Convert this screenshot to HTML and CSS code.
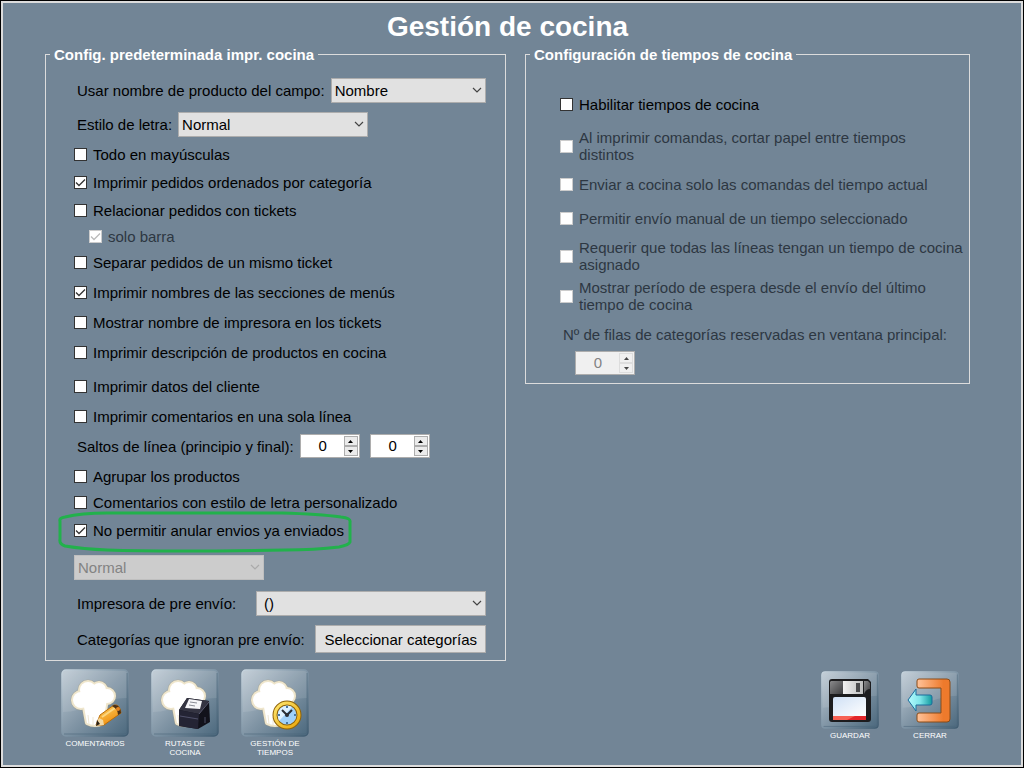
FILE: index.html
```html
<!DOCTYPE html>
<html lang="es">
<head>
    <meta charset="UTF-8">
    <meta name="viewport" content="width=device-width, initial-scale=1.0">
    <title>Gestión de cocina</title>
    <link rel="stylesheet" href="styles.css">
</head>
<body>
    <!-- Shared icon parts -->
    <svg class="defs" width="0" height="0" aria-hidden="true">
        <defs>
            <linearGradient id="tile" x1="0" y1="0" x2="1" y2="1">
                <stop offset="0" stop-color="#becad4"/>
                <stop offset="0.5" stop-color="#8296a6"/>
                <stop offset="1" stop-color="#4b687d"/>
            </linearGradient>
            <linearGradient id="edge" x1="0" y1="0" x2="1" y2="1">
                <stop offset="0" stop-color="#c9d6df"/>
                <stop offset="0.5" stop-color="#7f95a6"/>
                <stop offset="1" stop-color="#3f5b70"/>
            </linearGradient>
            <linearGradient id="pencil" x1="0" y1="0" x2="0.6" y2="1">
                <stop offset="0" stop-color="#ffd76a"/>
                <stop offset="1" stop-color="#ee8c0c"/>
            </linearGradient>
            <linearGradient id="door" x1="0" y1="0" x2="1" y2="0">
                <stop offset="0" stop-color="#ffc39a"/>
                <stop offset="0.8" stop-color="#ee7a2c"/>
            </linearGradient>
            <linearGradient id="arrow" x1="0" y1="0" x2="1" y2="0">
                <stop offset="0" stop-color="#b5fbff"/>
                <stop offset="0.5" stop-color="#7fe6ea"/>
                <stop offset="1" stop-color="#129a9f"/>
            </linearGradient>
            <linearGradient id="paper" x1="0" y1="0" x2="1" y2="1">
                <stop offset="0" stop-color="#cfe0f5"/>
                <stop offset="1" stop-color="#ffffff"/>
            </linearGradient>
            <linearGradient id="metal" x1="0" y1="0" x2="1" y2="0">
                <stop offset="0" stop-color="#f2f2f2"/>
                <stop offset="1" stop-color="#bdbdbd"/>
            </linearGradient>
            <linearGradient id="steel" x1="0" y1="0" x2="1" y2="1">
                <stop offset="0" stop-color="#8a8a8c"/>
                <stop offset="1" stop-color="#3c3c3e"/>
            </linearGradient>
            <linearGradient id="gold" x1="0" y1="0" x2="1" y2="1">
                <stop offset="0" stop-color="#ffe66e"/>
                <stop offset="1" stop-color="#e9a70c"/>
            </linearGradient>
            <symbol id="base" viewBox="0 0 68 68">
                <rect x="1" y="1" width="66" height="66" rx="4" fill="url(#tile)" stroke="url(#edge)" stroke-width="1.5"/>
                <path d="M2 5Q2 2 5 2H63Q66 2 66 5V29C43 29 22 43 2 43Z" fill="#ffffff" opacity="0.1"/>
                <path d="M3 65H63Q66 65 66 62V4" fill="none" stroke="#4b6579" stroke-width="1" opacity="0.6"/>
            </symbol>
            <g id="lobes">
                <circle cx="20" cy="31" r="8"/>
                <circle cx="27" cy="21" r="8"/>
                <circle cx="38" cy="21" r="7"/>
                <circle cx="46" cy="27" r="7"/>
                <circle cx="33" cy="29" r="12"/>
                <path d="M20 30H46L42 54Q34 58 26 54L23 38Z"/>
            </g>
            <symbol id="hat" viewBox="0 0 68 68">
                <use href="#lobes" fill="#a59c85" stroke="#a59c85" stroke-width="5" stroke-linejoin="round" opacity="0.5"/>
                <use href="#lobes" fill="#efe6cc" stroke="#efe6cc" stroke-width="4" stroke-linejoin="round"/>
                <use href="#lobes" fill="#ffffff"/>
                <path d="M27 46L28 55M32 48V56" stroke="#efe8d6" stroke-width="1"/>
            </symbol>
        </defs>
    </svg>

    <div class="window">
        <h1>Gestión de cocina</h1>

        <main class="panels">
            <fieldset class="panel">
                <legend>Config. predeterminada impr. cocina</legend>
                <div class="row lg text-row">
                    <label for="campo">Usar nombre de producto del campo:</label>
                    <select id="campo" class="fill">
                        <option>Nombre</option>
                    </select>
                </div>
                <div class="row lg text-row">
                    <label for="estilo">Estilo de letra:</label>
                    <select id="estilo" class="medium">
                        <option>Normal</option>
                    </select>
                </div>
                <label class="row"><input type="checkbox">Todo en mayúsculas</label>
                <label class="row md"><input type="checkbox" checked>Imprimir pedidos ordenados por categoría</label>
                <label class="row"><input type="checkbox">Relacionar pedidos con tickets</label>
                <label class="row sub disabled"><input type="checkbox" checked disabled>solo barra</label>
                <label class="row"><input type="checkbox">Separar pedidos de un mismo ticket</label>
                <label class="row lg"><input type="checkbox" checked>Imprimir nombres de las secciones de menús</label>
                <label class="row"><input type="checkbox">Mostrar nombre de impresora en los tickets</label>
                <label class="row lg"><input type="checkbox">Imprimir descripción de productos en cocina</label>
                <label class="row lg"><input type="checkbox">Imprimir datos del cliente</label>
                <label class="row"><input type="checkbox">Imprimir comentarios en una sola línea</label>
                <div class="row lg text-row">
                    <label for="saltos">Saltos de línea (principio y final):</label>
                    <div class="spinner">
                        <input type="number" id="saltos" value="0">
                        <div class="steps">
                            <button type="button" class="up" aria-label="Más"></button>
                            <button type="button" class="down" aria-label="Menos"></button>
                        </div>
                    </div>
                    <div class="spinner">
                        <input type="number" value="0" aria-label="Saltos de línea al final">
                        <div class="steps">
                            <button type="button" class="up" aria-label="Más"></button>
                            <button type="button" class="down" aria-label="Menos"></button>
                        </div>
                    </div>
                </div>
                <label class="row"><input type="checkbox">Agrupar los productos</label>
                <label class="row"><input type="checkbox">Comentarios con estilo de letra personalizado</label>
                <label class="row md marked">
                    <input type="checkbox" checked>No permitir anular envios ya enviados
                    <svg class="mark" viewBox="0 0 296 42" aria-hidden="true">
                        <path d="M3 10Q2 7 8 6Q24 2 50 2H225Q262 3 284 6Q294 7 293 11V31Q292 34 282 36Q258 39 228 39Q110 41 50 39Q26 38 8 35Q2 33 3 28Z" fill="none" stroke="#22b14c" stroke-width="3" stroke-linejoin="round"/>
                    </svg>
                </label>
                <div class="group">
                    <div class="row">
                        <select class="medium" aria-label="Estilo de los comentarios" disabled>
                            <option>Normal</option>
                        </select>
                    </div>
                    <div class="row text-row apart">
                        <label for="impresora">Impresora de pre envío:</label>
                        <select id="impresora" class="wide">
                            <option>()</option>
                        </select>
                    </div>
                    <div class="row text-row apart">
                        <span>Categorías que ignoran pre envío:</span>
                        <button type="button" class="pick">Seleccionar categorías</button>
                    </div>
                </div>
            </fieldset>

            <fieldset class="panel times">
                <legend>Configuración de tiempos de cocina</legend>
                <label class="row xl"><input type="checkbox">Habilitar tiempos de cocina</label>
                <label class="row xl disabled"><input type="checkbox" disabled><span>Al imprimir comandas, cortar papel entre tiempos<br>distintos</span></label>
                <label class="row lg disabled"><input type="checkbox" disabled><span>Enviar a cocina solo las comandas del tiempo actual</span></label>
                <label class="row lg disabled"><input type="checkbox" disabled><span>Permitir envío manual de un tiempo seleccionado</span></label>
                <label class="row xl disabled"><input type="checkbox" disabled><span>Requerir que todas las líneas tengan un tiempo de cocina asignado</span></label>
                <label class="row two disabled"><input type="checkbox" disabled><span>Mostrar período de espera desde el envío del último<br>tiempo de cocina</span></label>
                <label class="count disabled" for="filas">Nº de filas de categorías reservadas en ventana principal:</label>
                <div class="spinner off">
                    <input type="number" id="filas" value="0" disabled>
                    <div class="steps">
                        <button type="button" class="up" aria-label="Más" disabled></button>
                        <button type="button" class="down" aria-label="Menos" disabled></button>
                    </div>
                </div>
            </fieldset>
        </main>

        <footer>
            <div class="actions">
                <button type="button" class="tile">
                    <svg viewBox="0 0 68 68" aria-hidden="true">
                        <use href="#base"/>
                        <use href="#hat"/>
                        <path d="M39 46L53 36Q59 35 60 44L43 56L35 56Z" fill="url(#pencil)" stroke="#b96c08" stroke-width="1"/>
                        <path d="M41 48L54 39" stroke="#fff0b0" stroke-width="2" opacity="0.6"/>
                        <path d="M39 46L38 49L42 51L43 56L35 56Z" fill="#f3d9a4"/>
                        <path d="M36 51L39 55L35 57Z" fill="#2b2014"/>
                        <path d="M53 36Q59 35 60 44L57 46Q57 40 51 37Z" fill="#4a2f16"/>
                        <circle cx="57" cy="40" r="2" fill="#e58420"/>
                    </svg>
                    <span>COMENTARIOS</span>
                </button>
                <button type="button" class="tile">
                    <svg viewBox="0 0 68 68" aria-hidden="true">
                        <use href="#base"/>
                        <use href="#hat"/>
                        <path d="M28 41L36 29L58 32L59 53L47 60L28 57Z" fill="#12121b"/>
                        <path d="M28 41L36 29L58 32L48 45Z" fill="#343442"/>
                        <path d="M28 41L48 45L47 60L28 57Z" fill="#242434"/>
                        <path d="M29 47L47 50" stroke="#50516a" stroke-width="1"/>
                        <path d="M34 39L38 30L51 32L49 40Z" fill="#f5f5f8"/>
                        <path d="M39 33L46 34M38 36L44 37" stroke="#8a8d96" stroke-width="1"/>
                        <path d="M48 45L58 33" stroke="#5b5c72" stroke-width="1"/>
                        <path d="M54 48V54" stroke="#4b4c62" stroke-width="1"/>
                    </svg>
                    <span>RUTAS DE COCINA</span>
                </button>
                <button type="button" class="tile">
                    <svg viewBox="0 0 68 68" aria-hidden="true">
                        <use href="#base"/>
                        <use href="#hat"/>
                        <circle cx="46" cy="46" r="12" fill="#9fd0fa" stroke="#8f6208" stroke-width="5"/>
                        <circle cx="46" cy="46" r="12" fill="none" stroke="url(#gold)" stroke-width="3"/>
                        <path d="M38 52Q35 44 40 39Q45 35 51 38Z" fill="#dff1ff"/>
                        <path d="M46 37V39M46 53V55M37 46H39M53 46H55" stroke="#4778a8" stroke-width="2"/>
                        <path d="M41 41L46 46L51 41" fill="none" stroke="#2a2f37" stroke-width="2"/>
                        <circle cx="46" cy="46" r="2" fill="#2a2f37"/>
                    </svg>
                    <span>GESTIÓN DE TIEMPOS</span>
                </button>
            </div>
            <div class="actions small">
                <button type="button" class="tile">
                    <svg viewBox="0 0 58 58" aria-hidden="true">
                        <use href="#base" width="58" height="58"/>
                        <path d="M11 8H47L50 11V48Q50 51 47 51H11Q8 51 8 48V11Q8 8 11 8Z" fill="#1c1c1e"/>
                        <path d="M10 10H22V23H9V11Z" fill="url(#steel)"/>
                        <path d="M22 10H42V23H22Z" fill="url(#metal)"/>
                        <rect x="35" y="12" width="4" height="9" fill="#4a4a4c"/>
                        <path d="M43 10H47L49 12V18Q45 18 43 23Z" fill="url(#steel)"/>
                        <path d="M14 26H43Q45 26 45 28V45H12V28Q12 26 14 26Z" fill="url(#paper)"/>
                        <path d="M12 45H45V49H12Z" fill="#e3262a"/>
                        <path d="M12 45H34L26 49H12Z" fill="#ff7a66" opacity="0.7"/>
                    </svg>
                    <span>GUARDAR</span>
                </button>
                <button type="button" class="tile">
                    <svg viewBox="0 0 58 58" aria-hidden="true">
                        <use href="#base" width="58" height="58"/>
                        <path d="M18 8H46Q49 8 49 11V48Q49 51 46 51H18Q16 51 16 49V44Q16 42 18 42H40V17H18Q16 17 16 15V10Q16 8 18 8Z" fill="url(#door)" stroke="#8a4b16" stroke-width="1"/>
                        <path d="M7 29L15 18V24H29Q31 24 31 26V32Q31 34 29 34H15V40Z" fill="url(#arrow)" stroke="#1d6c9c" stroke-width="1" stroke-linejoin="round"/>
                    </svg>
                    <span>CERRAR</span>
                </button>
            </div>
        </footer>
    </div>
</body>
</html>
```
FILE: styles.css
```css
* {
    box-sizing: border-box;
}
body {
    margin: 0;
    min-height: 100vh;
    display: flex;
    border: 1px solid #000;
    background-color: #728596;
    color: #000;
    font-family: "Liberation Sans", Arial, sans-serif;
    font-size: 15px;
    line-height: 17px;
}
.defs {
    position: absolute;
}
.window {
    flex: 1;
    border: 2px solid #dcdcdc;
    padding: 4px 51px 0 42px;
}
h1 {
    margin: 0;
    color: #fff;
    font-size: 28px;
    line-height: 39px;
    text-align: center;
}

/* Panels */
.panels {
    display: grid;
    grid-template-columns: 461fr 445fr;
    gap: 19px;
    align-items: start;
}
.panel {
    min-width: 0;
    margin: 0;
    padding: 10px 19px 8px 28px;
    border: 1px solid #dcdcdc;
}
.times {
    padding: 20px 4px 8px 34px;
}
legend {
    margin-left: -24px;
    padding: 0 4px;
    color: #fff;
    font-weight: bold;
}
.times legend {
    margin-left: -30px;
}

/* Rows */
.row {
    display: flex;
    align-items: center;
    gap: 6px;
    height: 26px;
}
.row.md {
    height: 30px;
}
.row.lg {
    height: 34px;
}
.row.two {
    height: 38px;
}
.row.xl {
    height: 42px;
}
.text-row {
    padding-left: 3px;
}
.apart {
    justify-content: space-between;
}
.sub {
    padding-left: 15px;
}
.disabled {
    color: #2d3742;
}
.group {
    display: flex;
    flex-direction: column;
    gap: 10px;
    padding-top: 9px;
}
.count {
    display: block;
    padding: 11px 0 8px 3px;
}

/* Controls */
input[type="checkbox"] {
    appearance: none;
    flex: none;
    width: 13px;
    height: 13px;
    margin: 0;
    border: 1px solid #333;
    background: #fff center / 11px 11px no-repeat;
}
input[type="checkbox"]:checked {
    background-image: url("data:image/svg+xml,%3Csvg xmlns='http://www.w3.org/2000/svg' viewBox='0 0 11 11'%3E%3Cpath d='M1 5.5L4 8.5L10 2.5' fill='none' stroke='%23333' stroke-width='1.3'/%3E%3C/svg%3E");
}
input[type="checkbox"]:disabled {
    border-color: #ccc;
}
input[type="checkbox"]:checked:disabled {
    background-image: url("data:image/svg+xml,%3Csvg xmlns='http://www.w3.org/2000/svg' viewBox='0 0 11 11'%3E%3Cpath d='M1 5.5L4 8.5L10 2.5' fill='none' stroke='%23bbb' stroke-width='1.3'/%3E%3C/svg%3E");
}
select {
    appearance: none;
    height: 25px;
    padding: 0 20px 0 3px;
    border: 1px solid #adadad;
    border-radius: 0;
    background: #e1e1e1 url("data:image/svg+xml,%3Csvg xmlns='http://www.w3.org/2000/svg' viewBox='0 0 10 6'%3E%3Cpath d='M1 1L5 5L9 1' fill='none' stroke='%23444' stroke-width='1.2'/%3E%3C/svg%3E") right 3px center / 10px 6px no-repeat;
    color: #000;
    font: inherit;
}
select:disabled {
    border-color: #bfbfbf;
    background-color: #ccc;
    background-image: url("data:image/svg+xml,%3Csvg xmlns='http://www.w3.org/2000/svg' viewBox='0 0 10 6'%3E%3Cpath d='M1 1L5 5L9 1' fill='none' stroke='%23aaa' stroke-width='1.2'/%3E%3C/svg%3E");
    color: #838383;
    opacity: 1;
}
.fill {
    flex: 1;
}
.medium {
    width: 190px;
}
.wide {
    width: 230px;
    padding-left: 7px;
}
.pick {
    height: 28px;
    padding: 0 8px;
    border: 1px solid #adadad;
    background: #e1e1e1;
    color: #000;
    font: inherit;
}
.spinner {
    display: flex;
    width: 60px;
    height: 24px;
    padding: 1px;
    border: 1px solid #adadad;
    background: #fff;
}
.spinner + .spinner {
    margin-left: 4px;
}
.spinner input {
    appearance: textfield;
    flex: 1;
    min-width: 0;
    padding: 0 0 2px;
    border: 0;
    background: transparent;
    color: #000;
    font: inherit;
    text-align: center;
}
.spinner input::-webkit-inner-spin-button {
    appearance: none;
    margin: 0;
}
.steps {
    display: flex;
    flex-direction: column;
    width: 14px;
}
.steps button {
    flex: 1;
    padding: 0;
    border: 1px solid #adadad;
    background: #ebebeb center / 5px 3px no-repeat;
}
.steps .up {
    background-image: url("data:image/svg+xml,%3Csvg xmlns='http://www.w3.org/2000/svg' viewBox='0 0 5 3'%3E%3Cpath d='M0 3L2.5 0L5 3Z'/%3E%3C/svg%3E");
}
.steps .down {
    background-image: url("data:image/svg+xml,%3Csvg xmlns='http://www.w3.org/2000/svg' viewBox='0 0 5 3'%3E%3Cpath d='M0 0L2.5 3L5 0Z'/%3E%3C/svg%3E");
}
.off {
    margin-left: 15px;
    background: #f0f0f0;
}
.off input {
    color: #838383;
}
.off .steps button {
    border-color: #d5d5d5;
    background-color: #f0f0f0;
}
.off .steps {
    opacity: 0.7;
}

/* Hand-drawn highlight round one option */
.marked {
    position: relative;
}
.mark {
    position: absolute;
    top: -4px;
    left: -17px;
    width: 296px;
    height: 42px;
    pointer-events: none;
}

/* Bottom buttons */
footer {
    display: flex;
    justify-content: space-between;
    padding: 8px 11px 0 16px;
}
.actions {
    display: flex;
    align-items: flex-start;
    gap: 22px;
}
.tile {
    display: flex;
    flex-direction: column;
    align-items: center;
    width: 68px;
    padding: 0;
    border: 0;
    background: none;
    color: #fff;
    font: inherit;
    font-size: 8px;
    line-height: 9px;
    cursor: pointer;
}
.tile svg {
    display: block;
    width: 100%;
}
.tile span {
    padding: 2px 4px 0;
}
.small {
    padding-top: 2px;
}
.small .tile {
    width: 58px;
}
```
